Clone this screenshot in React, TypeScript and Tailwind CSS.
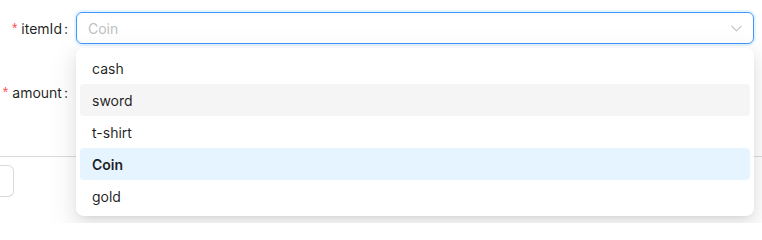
const options = ['cash', 'sword', 't-shirt', 'Coin', 'gold'];

function Label({ text }: { text: string }) {
  return (
    <div className="w-[76px] shrink-0 pr-[8px] flex items-center justify-end text-[14px] text-[rgba(0,0,0,0.88)]">
      <span className="text-[#ff4d4f] mr-[4px] text-[14px] leading-none font-['Liberation_Sans',sans-serif]">*</span>
      <span>{text}</span>
      <span className="ml-[2px]">:</span>
    </div>
  );
}

export default function App() {
  return (
    <div className="relative w-[762px] h-[223px] bg-white overflow-hidden font-['Inter',sans-serif]">
      <div className="flex flex-col gap-[32px] pt-[12px] pr-[8px]">
        <div className="flex h-[32px]">
          <Label text="itemId" />
          <div className="flex-1 flex items-center justify-between rounded-[6px] border border-[#4096ff] px-[11px] shadow-[0_0_0_2px_rgba(5,145,255,0.1)]">
            <span className="text-[14px] text-[#bfbfbf]">Coin</span>
            <svg width="11" height="7" viewBox="0 0 11 7" fill="none" className="mt-[1px]">
              <path d="M0.5 0.8 L5.5 5.8 L10.5 0.8" stroke="#bfbfbf" strokeWidth="1.1" />
            </svg>
          </div>
        </div>
        <div className="flex h-[32px]">
          <Label text="amount" />
          <div className="flex-1 rounded-[6px] border border-[#d9d9d9]" />
        </div>
      </div>

      <div className="mt-[48px] border-t border-[#dcdcdc]" />
      <div className="mt-[8px] flex">
        <div className="h-[32px] w-[14px] rounded-r-[6px] border border-l-0 border-[#d9d9d9]" />
      </div>

      <div className="absolute left-[76px] top-[48px] w-[678px] rounded-[8px] bg-white p-[4px] shadow-[0_6px_16px_0_rgba(0,0,0,0.08),0_3px_6px_-4px_rgba(0,0,0,0.12),0_9px_28px_8px_rgba(0,0,0,0.05)]">
        {options.map((opt) => (
          <div
            key={opt}
            className={`h-[32px] flex items-center px-[12px] rounded-[4px] text-[14px] text-[rgba(0,0,0,0.88)] ${
              opt === 'sword' ? 'bg-[#f5f5f5]' : ''
            } ${opt === 'Coin' ? 'bg-[#e6f4ff] font-semibold' : ''}`}
          >
            {opt}
          </div>
        ))}
      </div>
    </div>
  );
}
